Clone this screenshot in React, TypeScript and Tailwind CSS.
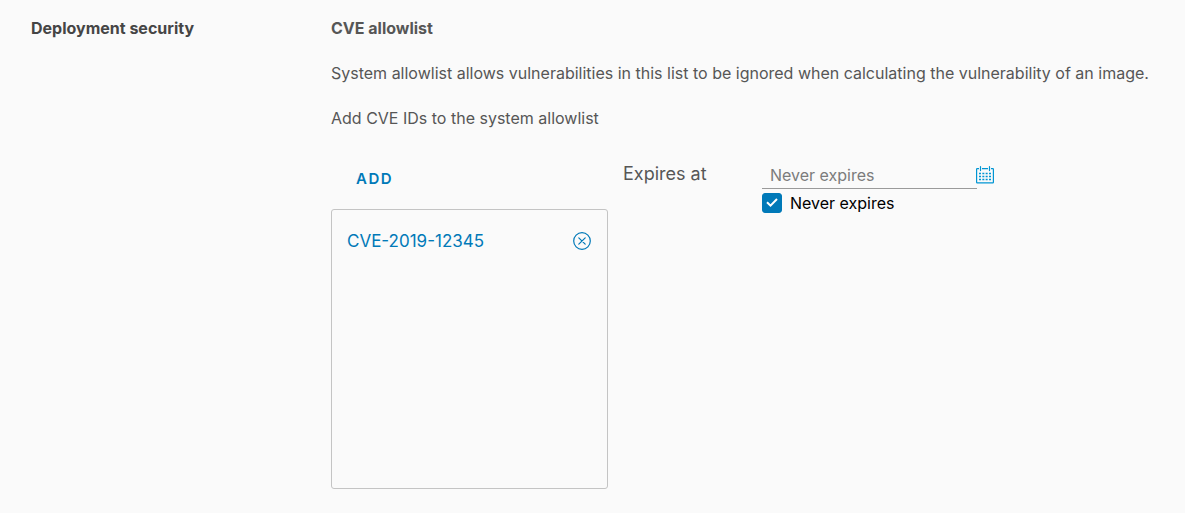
import { useState } from 'react';

function CloseCircleIcon() {
  return (
    <svg viewBox="0 0 18 18" className="size-[18px]" fill="none" stroke="currentColor" aria-hidden="true">
      <circle cx="9" cy="9" r="8.3" strokeWidth="1.2" />
      <path d="M5.8 5.8l6.4 6.4M12.2 5.8l-6.4 6.4" strokeWidth="1.2" strokeLinecap="round" />
    </svg>
  );
}

function CalendarIcon() {
  return (
    <svg viewBox="0 0 18 18" className="size-[18px]" fill="none" stroke="currentColor" aria-hidden="true">
      <path d="M3 2.6H1.2a.6.6 0 0 0-.6.6v13c0 .3.3.6.6.6h15.6c.3 0 .6-.3.6-.6v-13a.6.6 0 0 0-.6-.6H15M6 2.6h6" strokeWidth="1.2" />
      <path d="M4.5 0.6v4M13.5 0.6v4" strokeWidth="1.2" strokeLinecap="round" />
      <path d="M3 7.5h12M3 10.5h12M3 13.5h12" strokeWidth="1.4" strokeDasharray="2 1.33" />
    </svg>
  );
}

export default function App() {
  const [never, setNever] = useState(true);
  const [date, setDate] = useState('');
  const [items, setItems] = useState(['CVE-2019-12345']);

  const addItem = () => {
    const id = window.prompt('CVE ID');
    if (id) setItems([...items, id]);
  };

  return (
    <main className="min-h-screen bg-[#fafafa] font-['Inter','Open_Sans',sans-serif] text-base leading-6 text-[#565656]">
      <section className="flex pt-4 pb-6 pl-[31px]">
        <h2 className="w-[300px] shrink-0 font-bold text-[#454545]">Deployment security</h2>
        <div className="min-w-0 flex-1">
          <h3 className="font-bold">CVE allowlist</h3>
          <p className="mt-[21px]">
            System allowlist allows vulnerabilities in this list to be ignored when calculating the vulnerability of an image.
          </p>
          <p className="mt-[21px]">Add CVE IDs to the system allowlist</p>

          <div className="mt-[31px] flex items-start gap-[15px]">
            <div className="w-[277px] shrink-0">
              <button type="button" onClick={addItem} className="ml-[25px] block h-9 text-[15px] font-semibold tracking-widest text-[#0079b8]">
                ADD
              </button>
              <ul className="mt-3 h-[280px] overflow-y-auto rounded-[3px] border border-[#c4c4c4] py-[19px] pr-4 pl-[15px]">
                {items.map((id) => (
                  <li key={id} className="flex items-center justify-between text-[17px] text-[#0079b8]">
                    <a href="#cve">{id}</a>
                    <button type="button" aria-label={'Remove ' + id} onClick={() => setItems(items.filter((item) => item !== id))}>
                      <CloseCircleIcon />
                    </button>
                  </li>
                ))}
              </ul>
            </div>

            <label htmlFor="expires" className="w-[124px] shrink-0 text-lg leading-[26px]">Expires at</label>
            <div>
              <div className="flex items-center">
                <input
                  id="expires"
                  type="text"
                  placeholder="Never expires"
                  value={date}
                  disabled={never}
                  onChange={(event) => setDate(event.target.value)}
                  className="h-7 w-[215px] border-b border-[#9a9a9a] bg-transparent px-2 placeholder:text-[#7c7c7c]"
                />
                <button type="button" aria-label="Choose date" className="-ml-px text-[#0095d3]">
                  <CalendarIcon />
                </button>
              </div>
              <label className="mt-0.5 flex items-center gap-2 text-black">
                <span className="grid size-5 place-items-center">
                  <input
                    type="checkbox"
                    checked={never}
                    onChange={(event) => setNever(event.target.checked)}
                    className="col-start-1 row-start-1 size-5 appearance-none rounded-[3px] border border-[#0079b8] bg-white checked:bg-[#0079b8]"
                  />
                  <svg viewBox="0 0 20 20" className="pointer-events-none col-start-1 row-start-1 size-5" fill="none" stroke="white" strokeWidth="2" aria-hidden="true">
                    <path d="M5 9.3l3.5 3.4 6.5-6.7" />
                  </svg>
                </span>
                Never expires
              </label>
            </div>
          </div>
        </div>
      </section>
    </main>
  );
}
